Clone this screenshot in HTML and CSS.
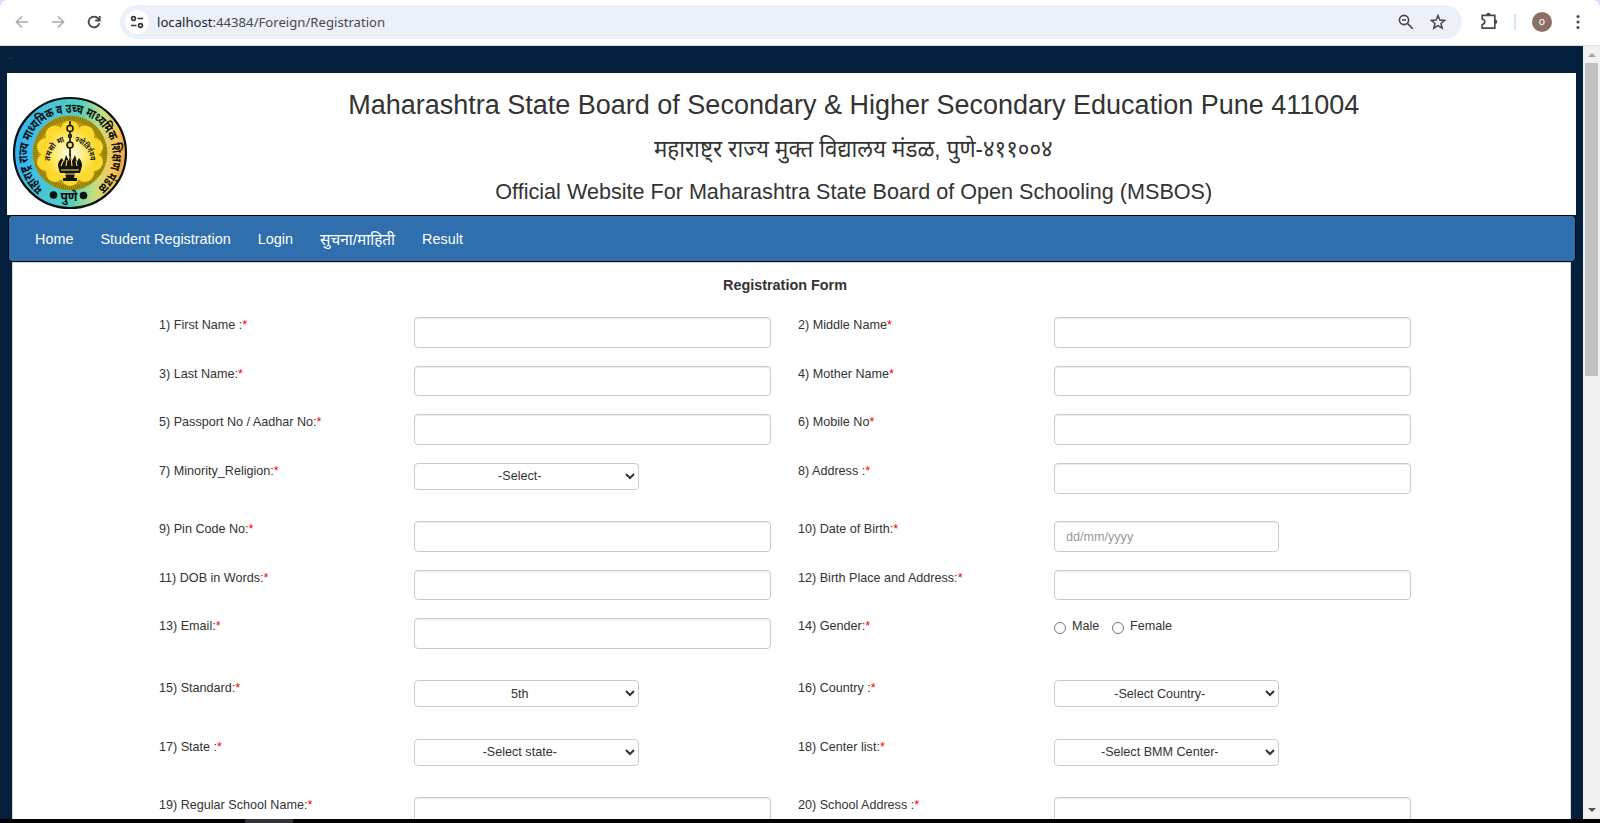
FILE: index.html
```html
<!DOCTYPE html>
<html lang="en">
<head>
<meta charset="utf-8">
<title>Registration</title>
<link rel="stylesheet" href="styles.css">
</head>
<body>
<header class="toolbar">
  <svg class="icon back" width="16" height="16" viewBox="0 0 16 16"><path d="M14 8H2.5M8 2.5L2.5 8L8 13.5"/></svg>
  <svg class="icon forward" width="16" height="16" viewBox="0 0 16 16"><path d="M2 8h11.500M8 2.500L13.500 8L8 13.500"/></svg>
  <svg class="icon reload" width="16" height="16" viewBox="0 0 16 16"><path d="M13.300 9.200A5.400 5.400 0 1 1 12.300 4.600L13.600 6"/><path d="M13.700 2v4.500H9.200"/></svg>
  <div class="omnibox">
    <span class="site-info"><svg width="14" height="14" viewBox="0 0 14 14"><circle cx="3.500" cy="3.500" r="1.900"/><path d="M7.500 3.500H13M1 10.500h5.500"/><circle cx="10.500" cy="10.500" r="1.900"/></svg></span>
    <span class="url"><b>localhost</b>:44384/Foreign/Registration</span>
    <svg class="icon zoom" width="16" height="16" viewBox="0 0 16 16"><circle cx="6" cy="6" r="4.600"/><path d="M9.400 9.400L14.800 14.800M4 6h4"/></svg>
    <svg class="icon star" width="16" height="16" viewBox="0 0 16 16"><path d="M8 1.600L9.900 6l4.800.4-3.700 3.100 1.200 4.700L8 11.700l-4.200 2.500L5 9.500 1.300 6.400 6.100 6z"/></svg>
  </div>
  <svg class="icon puzzle" width="18" height="18" viewBox="0 0 18 18"><path d="M2.200 3.300H14.800V16.200H2.200V12.600Q4.800 11.900 4.800 9.800Q4.800 7.700 2.200 7Z"/><path class="solid" d="M6.300 3a2.200 2.200 0 0 1 4.400 0zM15 7.500a2.200 2.200 0 0 1 0 4.400z"/></svg>
  <span class="divider"></span>
  <span class="avatar">o</span>
  <svg class="dots" width="4" height="16" viewBox="0 0 4 16"><circle cx="2" cy="2.500" r="1.500"/><circle cx="2" cy="8" r="1.500"/><circle cx="2" cy="13.500" r="1.500"/></svg>
</header>
<div class="viewport">
<main class="page">
  <div class="topline">"</div>
  <section class="banner">
    <svg class="emblem" width="116" height="114" viewBox="-58 -57 116 114">
      <defs>
        <linearGradient id="ring" x1="0" y1=".45" x2="1" y2=".55"><stop offset="0" stop-color="#35b0fa"/><stop offset=".25" stop-color="#45c4dc"/><stop offset=".55" stop-color="#52d0bc"/><stop offset=".75" stop-color="#c4e080"/><stop offset=".9" stop-color="#fcc450"/><stop offset="1" stop-color="#f89c3c"/></linearGradient>
        <radialGradient id="glow"><stop offset="0" stop-color="#fffbe4"/><stop offset=".55" stop-color="#ffee80"/><stop offset="1" stop-color="#fcd92c"/></radialGradient>
        <path id="arc" d="M-26.500 35.600A42.500 42.500 0 1 1 26.500 35.600"/>
        <path id="motto" d="M-20 8A20 20 0 0 1 20 8"/>
      </defs>
      <ellipse rx="56" ry="55" fill="url(#ring)" stroke="#0b1010" stroke-width="2.200"/>
      <circle r="37.500" fill="#b59b10"/>
      <circle r="34.500" fill="none" stroke="#8a7608" stroke-width="5" stroke-dasharray="1 1"/>
      <g fill="#fcd92c"><circle cx="0" cy="-23" r="9.500"/><circle cx="15" cy="-18" r="9.500"/><circle cx="24" cy="-6" r="9"/><circle cx="24" cy="9" r="9"/><circle cx="15" cy="20" r="9"/><circle cx="0" cy="24" r="9"/><circle cx="-15" cy="20" r="9"/><circle cx="-24" cy="9" r="9"/><circle cx="-24" cy="-6" r="9"/><circle cx="-15" cy="-18" r="9.500"/></g>
      <circle r="26" fill="url(#glow)"/>
      <text class="motto"><textPath href="#motto" textLength="26" lengthAdjust="spacingAndGlyphs">तमसो मा</textPath></text>
      <text class="motto"><textPath href="#motto" startOffset="36" textLength="26" lengthAdjust="spacingAndGlyphs">ज्योतिर्गमय</textPath></text>
      <g fill="#f8dc50" stroke="#15130a" stroke-width="1.600"><path d="M0-32V-28M0-21V-10M0-5V3"/><circle cy="-24.500" r="3"/><circle cy="-17" r="1.400"/><circle cy="-8" r="3"/></g>
      <path d="M-12 13Q-12 8-8 5L-6 9L-4 2L-1 8L0-1L2 8L5 2L7 9L9 5Q12 8 12 13L10 20H5L4 25H7V28H-7V25H-4L-5 20H-10Z" fill="#17150a"/>
      <path d="M-9 13L-7 8M-4 13L-3 7M2 13L1 4M7 13L6 8M-9 17H9M-5 21H5" stroke="#f8e47b" stroke-width="1.100" fill="none"/>
      <text class="ring-text"><textPath href="#arc" textLength="208" lengthAdjust="spacingAndGlyphs">महाराष्ट्र राज्य माध्यमिक व उच्च माध्यमिक शिक्षण मंडळ</textPath></text>
      <circle cx="-16.500" cy="42" r="3.800" fill="#0b1010"/><circle cx="13.500" cy="42.500" r="3.800" fill="#0b1010"/>
      <text class="city" x="-1" y="48" text-anchor="middle">पुणे</text>
    </svg>
    <div class="titles">
      <h1>Maharashtra State Board of Secondary &amp; Higher Secondary Education Pune 411004</h1>
      <h2 lang="mr">महाराष्ट्र राज्य मुक्त विद्यालय मंडळ, पुणे-४११००४</h2>
      <h3>Official Website For Maharashtra State Board of Open Schooling (MSBOS)</h3>
    </div>
  </section>
  <nav class="menu"><a>Home</a><a>Student Registration</a><a>Login</a><a lang="mr" class="notice">सुचना/माहिती</a><a>Result</a></nav>
  <form class="sheet">
    <h4>Registration Form</h4>
    <div class="fields">
      <label>1) First Name :<i>*</i></label><input><label>2) Middle Name<i>*</i></label><input>
      <label>3) Last Name:<i>*</i></label><input class="short"><label>4) Mother Name<i>*</i></label><input class="short">
      <label>5) Passport No / Aadhar No:<i>*</i></label><input><label>6) Mobile No<i>*</i></label><input>
      <label>7) Minority_Religion:<i>*</i></label><select><option>-Select-</option></select><label>8) Address :<i>*</i></label><input>
      <label>9) Pin Code No:<i>*</i></label><input><label>10) Date of Birth:<i>*</i></label><input class="date" placeholder="dd/mm/yyyy">
      <label>11) DOB in Words:<i>*</i></label><input class="short"><label>12) Birth Place and Address:<i>*</i></label><input class="short">
      <label>13) Email:<i>*</i></label><input><label>14) Gender:<i>*</i></label><div class="gender"><span class="radio"></span><span class="male">Male</span><span class="radio"></span><span>Female</span></div>
      <label>15) Standard:<i>*</i></label><select class="low"><option>5th</option></select><label>16) Country :<i>*</i></label><select class="low"><option>-Select Country-</option></select>
      <label>17) State :<i>*</i></label><select><option>-Select state-</option></select><label>18) Center list:<i>*</i></label><select><option>-Select BMM Center-</option></select>
      <label>19) Regular School Name:<i>*</i></label><input><label>20) School Address :<i>*</i></label><input>
    </div>
  </form>
</main>
<aside class="scrollbar"><span class="arrow up"></span><span class="thumb"></span><span class="arrow down"></span></aside>
</div>
<footer class="taskbar"><span></span></footer>
</body>
</html>
```
FILE: styles.css
```css
* { box-sizing: border-box; }
body { margin: 0; width: 1600px; height: 823px; overflow: hidden; display: flex; flex-direction: column; background: #d3e3fd; color: #333; font-family: "Liberation Sans", Arial, sans-serif; }

.toolbar { flex: none; height: 46px; display: flex; align-items: center; padding: 0 0 2px 14px; background: #fff; border-bottom: 1px solid #dcdfe3; border-radius: 8px 8px 0 0; }
.icon { flex: none; fill: none; stroke: #474747; stroke-width: 1.6; }
.back, .forward { stroke: #acacac; }
.forward { margin-left: 20px; }
.reload { margin-left: 20px; stroke-width: 1.8; }
.omnibox { margin-left: 18px; width: 1342px; height: 34px; border-radius: 17px; background: #ecf0f9; display: flex; align-items: center; padding-left: 5px; }
.site-info { width: 24px; height: 24px; border-radius: 50%; background: #fff; display: flex; align-items: center; justify-content: center; }
.site-info svg { fill: none; stroke: #30343a; stroke-width: 1.6; }
.url { margin-left: 8px; font: 13.15px "Noto Sans", sans-serif; color: #474a4f; white-space: nowrap; }
.url b { font-weight: 400; color: #1f1f1f; }
.zoom { margin-left: auto; }
.star { margin: 0 16px; stroke-width: 1.5; }
.puzzle { margin-left: 18px; stroke-width: 1.7; position: relative; top: -1px; }
.puzzle .solid { fill: #474747; stroke: none; }
.divider { margin-left: 16px; width: 2px; height: 16px; background: #d3e3fd; }
.avatar { margin-left: 16px; width: 20px; height: 20px; border-radius: 50%; background: #8d6e63; color: #fff; font: 11px/19px Roboto, sans-serif; text-align: center; }
.dots { margin-left: 24px; fill: #474747; }

.viewport { flex: none; height: 773px; display: flex; }
.page { width: 1583px; padding: 0 7px; background: #05203d; overflow: hidden; }
.topline { height: 27px; padding: 9px 0 0 1px; font-size: 12.6px; line-height: 15px; color: #333; }
.banner { width: 1569px; height: 142px; background: #fff; display: flex; }
.emblem { flex: none; margin: 23px 0 0 5px; }
.ring-text { font: bold 13px "Noto Sans Devanagari", "Noto Sans", sans-serif; fill: #0b1010; }
.motto { font: bold 8px "Noto Sans Devanagari", "Noto Sans", sans-serif; fill: #17150a; }
.city { font: bold 12px "Noto Sans Devanagari", "Noto Sans", sans-serif; fill: #0b1010; }
.titles { width: 1448px; margin-left: 3.5px; white-space: nowrap; display: flex; flex-direction: column; align-items: center; }
h1, h2, h3, h4 { margin: 0; font-weight: 400; }
h1 { font-size: 27px; line-height: 30px; margin-top: 17px; }
h2 { font: 24px/44px "Liberation Sans", "Noto Sans Devanagari", sans-serif; margin-top: 7px; transform: scaleX(.93); }
h3 { font-size: 21.6px; line-height: 24px; margin-top: 9px; }

.menu { margin-left: .5px; width: 1568px; height: 47px; display: flex; align-items: center; gap: 27px; padding-left: 26.5px; background: #2f6fae; border: 1px solid #03060b; border-radius: 4px; color: #fff; font-size: 14.4px; white-space: nowrap; }
.notice { font: 15.4px/20px "Liberation Sans", "Noto Sans Devanagari", sans-serif; padding-top: 2px; }

.sheet { margin-left: 5px; width: 1559px; height: 600px; background: #fff; border: 1px solid #d3d5d8; }
h4 { font-size: 14.4px; line-height: 18px; font-weight: 700; margin: 13px 13px 23px 0; text-align: center; }
.fields { display: grid; grid-template-columns: 255px 384px 256px 357px; grid-template-rows: 49px 48px 49px 58px 49px 48px 62px 59px 58px 49px; padding-left: 146px; align-items: start; font-size: 12.6px; }
.fields label { line-height: 15px; padding-top: 1px; white-space: nowrap; }
.fields i { color: red; font-style: normal; }
.fields input, .fields select { display: block; width: 357px; height: 31px; margin: 0; padding: 0 11px; border: 1px solid #ccc; border-radius: 4px; background: #fff; color: #333; font: 12.6px "Liberation Sans", Arial, sans-serif; box-shadow: inset 0 1px 1px rgba(0,0,0,.075); }
.fields .short { height: 30px; }
.fields input.date { width: 225px; }
.date::placeholder { color: #999; }
.fields select { width: 225px; height: 27px; padding: 0 1.5px 1px 0; text-align-last: center; box-shadow: none; }
.fields select.low { padding: 0 1.5px 0 0; }
.gender { display: flex; align-items: flex-start; line-height: 15px; }
.gender span:not(.radio) { padding-top: 1px; }
.radio { width: 12px; height: 12px; margin: 4px 6px 0 0; border: 1px solid #767676; border-radius: 50%; }
.male { width: 40px; }

.scrollbar { width: 17px; background: #f1f1f1; display: flex; flex-direction: column; align-items: center; padding: 7px 0 7px; }
.arrow { border: 4px solid transparent; border-top-width: 0; border-bottom: 4px solid #a3a3a3; }
.thumb { margin-top: 6px; width: 13px; height: 313px; background: #c1c1c1; }
.down { margin-top: auto; border-bottom-width: 0; border-top: 4px solid #505050; }
.taskbar { flex: none; height: 4px; background: #000; }
.taskbar span { display: block; margin-left: 105px; width: 48px; height: 4px; background: #333438; }
.taskbar { padding-left: 140px; }
```
